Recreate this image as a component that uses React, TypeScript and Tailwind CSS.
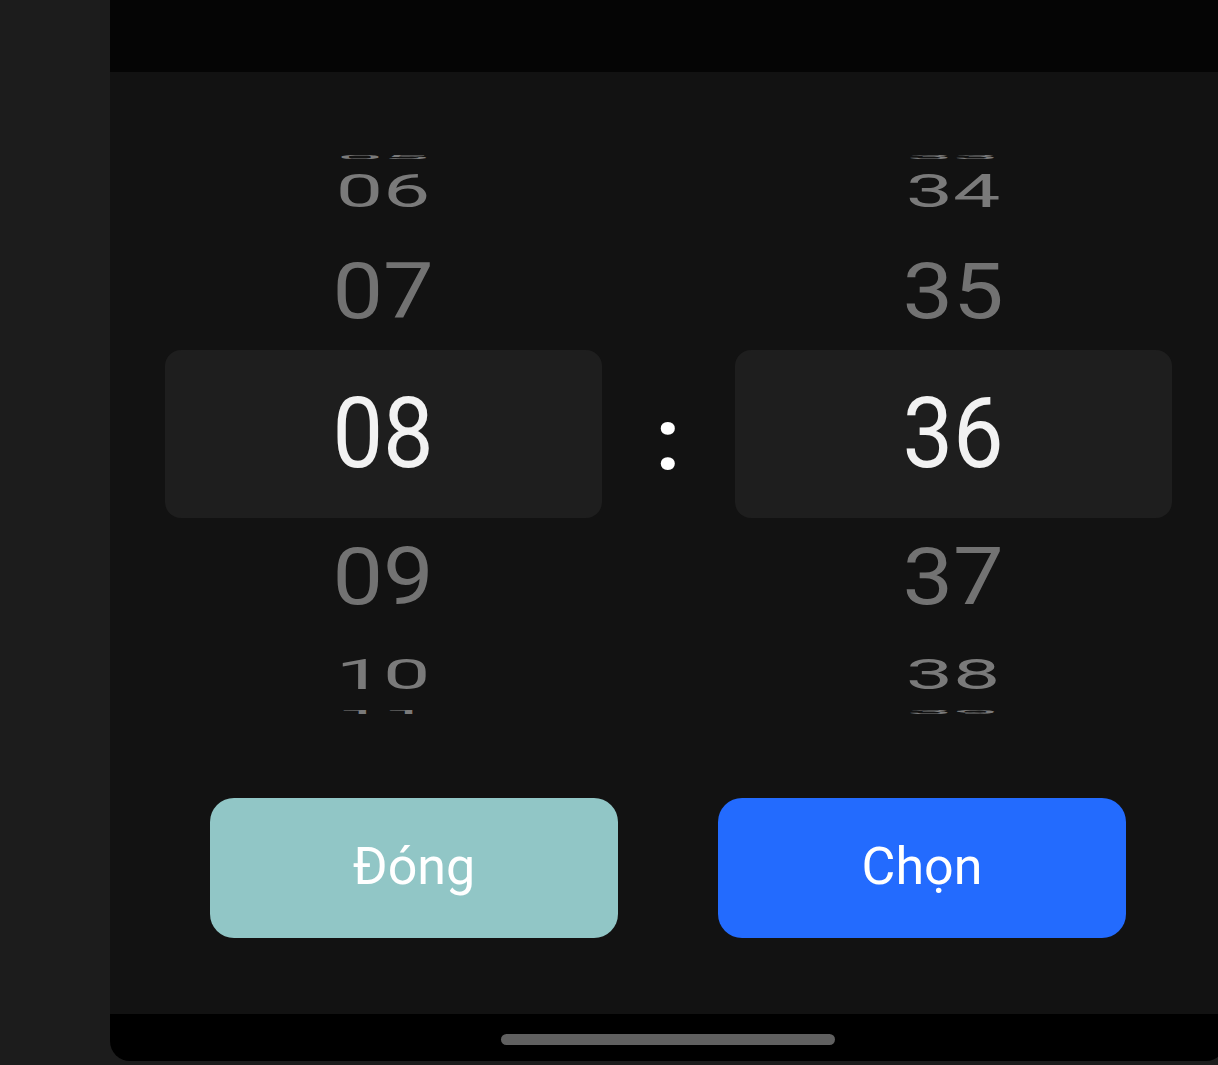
import React from 'react';

type Row = {
    value: string;
    box: string;
    text: string;
};

// wheel rows, top to bottom: squashed edges, near neighbours, selected in the middle
const rowStyles = [
    { box: 'h-[20px]', text: 'scale-y-[0.05] scale-x-[0.84] text-[#7a7a7a]' },
    { box: 'mt-[7px] h-[34px]', text: 'scale-y-[0.47] scale-x-[0.86] text-[#7a7a7a]' },
    { box: 'mt-[54px] h-[60px]', text: 'scale-y-[0.8] scale-x-[0.92] text-[#727272]' },
    { box: 'mt-[28px] h-[168px] w-full rounded-[16px] bg-[#1e1e1e]', text: 'scale-x-[0.92] text-[#f2f2f2]' },
    { box: 'mt-[29px] h-[60px]', text: 'scale-y-[0.81] scale-x-[0.92] text-[#727272]' },
    { box: 'mt-[51px] h-[34px]', text: 'scale-y-[0.43] scale-x-[0.86] text-[#7a7a7a]' },
    { box: 'mt-[10px] h-[20px]', text: 'scale-y-[0.05] scale-x-[0.84] text-[#7a7a7a]' },
];

function Wheel({ values }: { values: string[] }) {
    const rows: Row[] = values.map((value, i) => ({ value, ...rowStyles[i] }));
    return (
        <div className="flex w-[437px] flex-col items-center">
            {rows.map((row) => (
                <div key={row.value} className={`flex items-center justify-center ${row.box}`}>
                    <span className={`inline-block text-[98px] leading-none ${row.text}`}>{row.value}</span>
                </div>
            ))}
        </div>
    );
}

export default function App() {
    const hours = ['05', '06', '07', '08', '09', '10', '11'];
    const minutes = ['33', '34', '35', '36', '37', '38', '39'];

    return (
        <div className="flex h-[1065px] w-[1218px] overflow-hidden bg-[#1c1c1c] font-['Roboto',sans-serif]">
            {/* left edge of the page behind the sheet */}
            <div className="w-[110px] shrink-0" />

            {/* Sheet */}
            <div className="flex h-[1061px] w-[1116px] shrink-0 flex-col overflow-hidden rounded-b-[20px]">
                <div className="h-[72px] bg-[#050505]" />

                <div className="flex flex-1 flex-col bg-[#121212]">
                    {/* Time picker */}
                    <div className="mx-auto mt-[75px] flex">
                        <Wheel values={hours} />
                        <div className="flex w-[133px] items-start justify-center">
                            <span className="mt-[249px] inline-block text-[88px] font-bold leading-none text-white">:</span>
                        </div>
                        <Wheel values={minutes} />
                    </div>

                    {/* Actions */}
                    <div className="mt-[76px] flex gap-[100px] px-[100px]">
                        <button className="flex h-[140px] flex-1 items-center justify-center rounded-[24px] bg-[#91c6c6] pb-[2px] text-[52px] text-white">
                            Đóng
                        </button>
                        <button className="flex h-[140px] flex-1 items-center justify-center rounded-[24px] bg-[#236bfe] pb-[2px] text-[52px] text-white">
                            Chọn
                        </button>
                    </div>
                </div>

                {/* Home indicator */}
                <div className="flex h-[47px] items-center justify-center bg-black pt-[3px]">
                    <div className="h-[11px] w-[334px] rounded-full bg-[#606060]" />
                </div>
            </div>
        </div>
    );
}
